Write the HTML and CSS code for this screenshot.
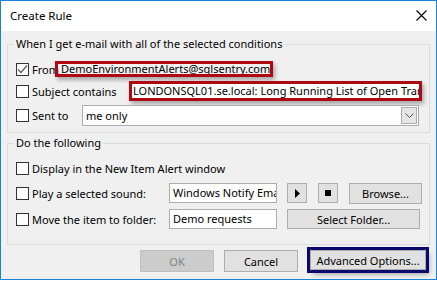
FILE: index.html
```html
<!doctype html>
<html lang="en">
<head>
<meta charset="utf-8">
<title>Create Rule</title>
<link rel="stylesheet" href="styles.css">
</head>
<body>
<div class="window">
	<div class="titlebar">
		<span class="title">Create Rule</span>
		<svg class="close" width="11" height="11" viewBox="0 0 11 11"><path d="M0.5 0.5 L10.5 10.5 M10.5 0.5 L0.5 10.5" stroke="#000" stroke-width="1.1" fill="none"/></svg>
	</div>
	<div class="content">
		<fieldset class="group group-conditions">
			<legend>When I get e-mail with all of the selected conditions</legend>
			<div class="row row-from">
				<span class="check"><svg width="11" height="11" viewBox="0 0 11 11"><path d="M1 5.5 L4 8.5 L10 1.5" stroke="#5a5a5a" stroke-width="1.3" fill="none"/></svg></span>
				<span class="label label-from">From</span>
				<span class="mark mark-from">DemoEnvironmentAlerts@sqlsentry.com</span>
			</div>
			<div class="row row-subject">
				<span class="check"></span>
				<span class="label label-subject">Subject contains</span>
				<span class="mark mark-subject">LONDONSQL01.se.local: Long Running List of Open Transactions</span>
			</div>
			<div class="row row-sent">
				<span class="check"></span>
				<span class="label label-sent">Sent to</span>
				<span class="combo">
					<span class="combo-text">me only</span>
					<span class="combo-btn"><svg width="9" height="5" viewBox="0 0 9 5"><path d="M0.5 0.5 L4.5 4.5 L8.5 0.5" stroke="#555" fill="none"/></svg></span>
				</span>
			</div>
		</fieldset>
		<fieldset class="group group-actions">
			<legend>Do the following</legend>
			<div class="row row-display">
				<span class="check"></span>
				<span class="label">Display in the New Item Alert window</span>
			</div>
			<div class="row row-sound">
				<span class="check"></span>
				<span class="label label-action">Play a selected sound:</span>
				<span class="field field-action">Windows Notify Email.wav</span>
				<span class="button button-icon"><svg width="5" height="9" viewBox="0 0 5 9"><path d="M0 0 L5 4.5 L0 9 Z" fill="#000"/></svg></span>
				<span class="button button-icon button-stop"><span class="stop-square"></span></span>
				<span class="button button-browse">Browse...</span>
			</div>
			<div class="row row-move">
				<span class="check"></span>
				<span class="label label-action">Move the item to folder:</span>
				<span class="field field-action">Demo requests</span>
				<span class="button button-folder">Select Folder...</span>
			</div>
		</fieldset>
		<div class="footer">
			<span class="button button-ok">OK</span>
			<span class="button button-cancel">Cancel</span>
			<span class="button button-advanced">Advanced Options...</span>
		</div>
	</div>
</div>
</body>
</html>
```

FILE: styles.css
```css
html, body { margin: 0; padding: 0; background: #ffffff; }
body { font-family: "Noto Sans", sans-serif; font-size: 11px; color: #000; }

.window {
	width: 437px;
	height: 280px;
	box-sizing: border-box;
	border: 1px solid #1883d7;
	background: #f0f0f0;
	display: flex;
	flex-direction: column;
}

.titlebar {
	height: 30px;
	background: #fff;
	display: flex;
	align-items: center;
	padding: 0 9px 0 9px;
	flex: none;
}
.title { flex: 1; font-size: 11.5px; line-height: 16px; margin-top: -1px; }
.close { margin-right: 0; margin-top: -2px; }

.content { padding: 0 6px; }

/* group boxes */
.group {
	margin: 5px 0 0 0;
	padding: 0 6px 6px 8px;
	border: 1px solid #dcdcdc;
	min-width: 0;
}
.group legend {
	padding: 0 2px;
	margin-left: -2px;
	line-height: 16px;
}
.group-actions { margin-top: 2px; padding-bottom: 14px; }

.row { display: flex; align-items: center; height: 22px; }
.row-from { margin-top: 6px; }
.row-sent { margin-top: 2px; }
.row-display { margin-top: 6px; }
.row-sound { margin-top: 3px; }
.row-move { margin-top: 4px; }

.check {
	width: 11px;
	height: 11px;
	border: 1px solid #333;
	background: #fff;
	flex: none;
	display: flex;
	align-items: center;
	justify-content: center;
}
.label { margin-left: 3px; white-space: nowrap; flex: none; }
.label-from { width: 24px; }
.label-subject { width: 97px; }
.label-sent { width: 50px; }
.label-action { width: 137px; }

/* red annotation boxes */
.mark {
	box-sizing: border-box;
	border: 3px solid #b00812;
	box-shadow: 2px 3px 4px rgba(0,0,0,0.3);
	white-space: nowrap;
	overflow: hidden;
	line-height: 13px;
}
.mark-from { width: 218px; height: 16px; padding-left: 3px; margin-left: -1px; line-height: 10px; }
.mark-subject { width: 293px; height: 20px; padding-left: 1px; line-height: 14px; background: #fff; }

.combo {
	width: 337px;
	height: 21px;
	box-sizing: border-box;
	border: 1px solid #adadad;
	background: #fff;
	display: flex;
	align-items: center;
	margin-top: 1px;
}
.combo-text { flex: 1; padding-left: 3px; }
.combo-btn {
	width: 16px;
	height: 17px;
	margin-right: 1px;
	box-sizing: border-box;
	border: 1px solid #adadad;
	background: #e5e5e5;
	display: flex;
	align-items: center;
	justify-content: center;
}

.field {
	box-sizing: border-box;
	height: 20px;
	border: 1px solid #adadad;
	background: #fff;
	padding-left: 3px;
	line-height: 18px;
	white-space: nowrap;
	overflow: hidden;
	flex: none;
}
.field-action { width: 108px; }

.button {
	box-sizing: border-box;
	height: 21px;
	border: 1px solid #adadad;
	background: #e1e1e1;
	display: flex;
	align-items: center;
	justify-content: center;
	white-space: nowrap;
	flex: none;
}
.button-icon { width: 20px; height: 20px; margin-left: 10px; }
.button-stop { margin-left: 11px; }
.stop-square { width: 6px; height: 6px; background: #000; }
.button-browse { width: 73px; margin-left: 11px; }
.button-folder { width: 133px; height: 20px; margin-left: 10px; }

.footer {
	display: flex;
	justify-content: flex-end;
	padding: 5px 4px 0 0;
}
.button-ok { width: 74px; height: 22px; background: #cccccc; border-color: #bfbfbf; color: #838383; }
.button-cancel { width: 74px; height: 22px; margin-left: 10px; }
.button-advanced {
	width: 116px;
	height: 20px;
	margin-left: 12px;
	margin-top: 0;
	outline: 3px solid #0a0a6e;
	outline-offset: 0;
	box-shadow: 3px 4px 5px rgba(0,0,0,0.35);
}
```
